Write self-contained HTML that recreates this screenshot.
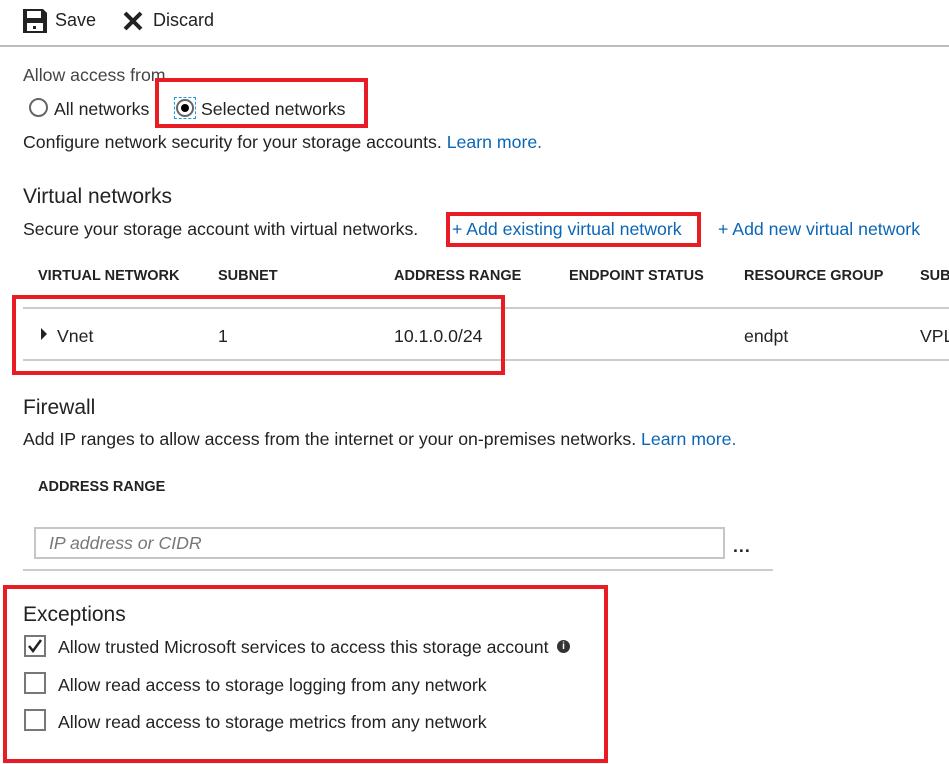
<!DOCTYPE html>
<html><head><meta charset="utf-8"><style>
body{margin:0;width:949px;height:764px;background:#fff;position:relative;overflow:hidden;font-family:"Liberation Sans",sans-serif;color:#222;font-size:17.7px}
.a{position:absolute;white-space:nowrap}
.lnk{color:#0b66b6}
.red{position:absolute;border:4px solid #e81c24;box-sizing:border-box}
.th{position:absolute;top:268px;font-size:14.5px;font-weight:bold;color:#222}
.cb{position:absolute;left:24px;width:22px;height:22px;border:2px solid #777;box-sizing:border-box}
</style></head><body>
<svg class="a" style="left:23px;top:9px" width="24" height="24" viewBox="0 0 24 24"><path d="M0 0H20L24 4V24H0Z M4 2V9H18V2Z M4 14V22H20V14Z" fill="#222" fill-rule="evenodd"/><rect x="10" y="17" width="3" height="3" fill="#222"/></svg>
<div class="a" style="left:55px;top:10px;font-size:18px">Save</div>
<svg class="a" style="left:123px;top:11px" width="20" height="20" viewBox="0 0 20 20"><path d="M2 2L18 18M18 2L2 18" stroke="#222" stroke-width="4"/></svg>
<div class="a" style="left:153px;top:10px;font-size:18px">Discard</div>
<div class="a" style="left:0;top:45px;width:949px;height:2px;background:#bdbdbd"></div>

<div class="a" style="left:23px;top:65px;color:#444">Allow access from</div>
<div class="a" style="left:29px;top:98px;width:19px;height:19px;border:2px solid #666;border-radius:50%;box-sizing:border-box"></div>
<div class="a" style="left:54px;top:99px">All networks</div>
<div class="red" style="left:155px;top:78px;width:213px;height:50px"></div>
<div class="a" style="left:174px;top:97px;width:22px;height:22px;border:1px dashed #1ba1e2;box-sizing:border-box"></div>
<div class="a" style="left:176px;top:99px;width:18px;height:18px;border:2px solid #666;border-radius:50%;box-sizing:border-box"></div>
<div class="a" style="left:181px;top:104px;width:8px;height:8px;background:#000;border-radius:50%"></div>
<div class="a" style="left:201px;top:99px">Selected networks</div>
<div class="a" style="left:23px;top:132px">Configure network security for your storage accounts. <span class="lnk">Learn more.</span></div>

<div class="a" style="left:23px;top:185px;font-size:21px">Virtual networks</div>
<div class="a" style="left:23px;top:219px">Secure your storage account with virtual networks.</div>
<div class="red" style="left:446px;top:212px;width:255px;height:35px"></div>
<div class="a lnk" style="left:452px;top:219px">+ Add existing virtual network</div>
<div class="a lnk" style="left:718px;top:219px">+ Add new virtual network</div>

<div class="th" style="left:38px">VIRTUAL NETWORK</div>
<div class="th" style="left:218px">SUBNET</div>
<div class="th" style="left:394px">ADDRESS RANGE</div>
<div class="th" style="left:569px">ENDPOINT STATUS</div>
<div class="th" style="left:744px">RESOURCE GROUP</div>
<div class="th" style="left:920px">SUB</div>
<div class="a" style="left:23px;top:307px;width:926px;height:2px;background:#ccc"></div>
<div class="a" style="left:23px;top:359px;width:926px;height:2px;background:#ccc"></div>
<div class="a" style="left:41px;top:328px;width:0;height:0;border-left:6px solid #222;border-top:6px solid transparent;border-bottom:6px solid transparent"></div>
<div class="a" style="left:57px;top:326px">Vnet</div>
<div class="a" style="left:218px;top:326px">1</div>
<div class="a" style="left:394px;top:326px">10.1.0.0/24</div>
<div class="a" style="left:744px;top:326px">endpt</div>
<div class="a" style="left:920px;top:326px">VPL</div>
<div class="red" style="left:12px;top:295px;width:493px;height:80px"></div>

<div class="a" style="left:23px;top:396px;font-size:21px">Firewall</div>
<div class="a" style="left:23px;top:429px">Add IP ranges to allow access from the internet or your on-premises networks. <span class="lnk">Learn more.</span></div>
<div class="th" style="left:38px;top:479px">ADDRESS RANGE</div>
<div class="a" style="left:34px;top:527px;width:691px;height:32px;border:2px solid #c6c6c6;box-sizing:border-box"></div>
<div class="a" style="left:49px;top:533px;font-style:italic;color:#777">IP address or CIDR</div>
<div class="a" style="left:733px;top:536px;font-weight:bold;letter-spacing:1px">...</div>
<div class="a" style="left:23px;top:569px;width:750px;height:2px;background:#ccc"></div>

<div class="red" style="left:3px;top:585px;width:605px;height:178px"></div>
<div class="a" style="left:23px;top:603px;font-size:21px">Exceptions</div>
<div class="cb" style="top:635px"></div>
<svg class="a" style="left:27px;top:638px" width="16" height="16" viewBox="0 0 16 16"><path d="M2 8L6 13L14 2" stroke="#222" stroke-width="2.5" fill="none"/></svg>
<div class="a" style="left:58px;top:637px">Allow trusted Microsoft services to access this storage account</div>
<div class="a" style="left:557px;top:640px;width:13px;height:13px;border-radius:50%;background:#333;color:#fff;font-size:10px;font-weight:bold;text-align:center;line-height:13px">i</div>
<div class="cb" style="top:672px"></div>
<div class="a" style="left:58px;top:675px">Allow read access to storage logging from any network</div>
<div class="cb" style="top:709px"></div>
<div class="a" style="left:58px;top:712px">Allow read access to storage metrics from any network</div>
</body></html>
